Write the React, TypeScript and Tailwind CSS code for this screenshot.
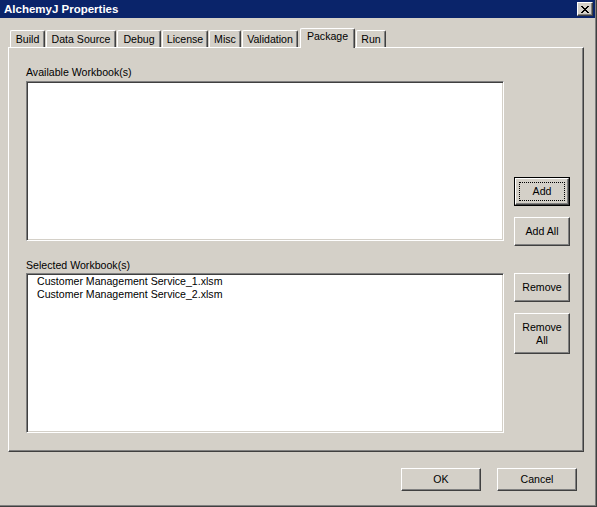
import React from 'react';

// 标签页数据
const tabs = [
  { label: 'Build', width: 'w-[35px]' },
  { label: 'Data Source', width: 'w-[70px]' },
  { label: 'Debug', width: 'w-[44px]' },
  { label: 'License', width: 'w-[46px]' },
  { label: 'Misc', width: 'w-[32px]' },
  { label: 'Validation', width: 'w-[56px]' },
  { label: 'Package', width: 'w-[55px]', active: true },
  { label: 'Run', width: 'w-[30px]' },
];

const selectedWorkbooks = [
  'Customer Management Service_1.xlsm',
  'Customer Management Service_2.xlsm',
];

function Tab({ label, width, active }: { label: string; width: string; active?: boolean }) {
  if (active) {
    return (
      <div
        className={`${width} h-[20px] -mb-px ml-px z-10 bg-[#d4d0c8] border-t border-l border-white border-r border-r-[#404040] shadow-[inset_-1px_0_0_#808080] rounded-t-[2px] flex justify-center pt-[1px]`}
      >
        <span className="leading-[13px]">{label}</span>
      </div>
    );
  }
  return (
    <div
      className={`${width} h-[17px] bg-[#d4d0c8] border-t border-l border-white border-r border-r-[#404040] shadow-[inset_-1px_0_0_#808080] rounded-t-[2px] flex justify-center pt-[2px]`}
    >
      <span className="leading-[13px]">{label}</span>
    </div>
  );
}

function Button({
  children,
  className = '',
  isDefault,
}: {
  children: React.ReactNode;
  className?: string;
  isDefault?: boolean;
}) {
  if (isDefault) {
    return (
      <div className={`border border-black bg-[#d4d0c8] flex ${className}`}>
        <div className="flex-1 relative border-t border-l border-white border-r border-b border-r-[#404040] border-b-[#404040] shadow-[inset_-1px_-1px_0_#808080] flex items-center justify-center">
          <div className="absolute inset-[3px] border border-dotted border-black" />
          <span className="leading-[13px] text-center">{children}</span>
        </div>
      </div>
    );
  }
  return (
    <div
      className={`bg-[#d4d0c8] border-t border-l border-white border-r border-b border-r-[#404040] border-b-[#404040] shadow-[inset_-1px_-1px_0_#808080] flex items-center justify-center ${className}`}
    >
      <span className="leading-[13px] text-center">{children}</span>
    </div>
  );
}

function ListBox({ items = [] as string[] }) {
  return (
    <div className="w-[478px] h-[160px] bg-white border-t border-l border-[#808080] border-r border-b border-r-white border-b-white shadow-[inset_1px_1px_0_#404040,inset_-1px_-1px_0_#d4d0c8] pt-[1px] pl-[10px]">
      {items.map(item => (
        <div key={item} className="leading-[13px]">
          {item}
        </div>
      ))}
    </div>
  );
}

export default function App() {
  return (
    <div className="w-[597px] h-[507px] bg-[#d4d0c8] border-r border-b border-[#404040] shadow-[inset_-1px_-1px_0_#808080] flex flex-col text-[10.6px] text-black font-['Liberation_Sans',Arial,sans-serif]">
      {/* 标题栏 */}
      <div className="h-[18px] mr-px bg-[#0a246a] flex items-center justify-between pl-[4px] pr-[2px]">
        <span className="text-white font-bold text-[11.5px] leading-[14px]">AlchemyJ Properties</span>
        <div className="w-[16px] h-[14px] bg-[#d4d0c8] border-t border-l border-white border-r border-b border-r-[#404040] border-b-[#404040] shadow-[inset_-1px_-1px_0_#808080] flex items-center justify-center">
          <svg width="8" height="7" viewBox="0 0 8 7" shapeRendering="crispEdges">
            <path d="M0 0h2v1h-2zM6 0h2v1h-2zM1 1h2v1h-2zM5 1h2v1h-2zM2 2h4v1h-4zM3 3h2v1h-2zM2 4h4v1h-4zM1 5h2v1h-2zM5 5h2v1h-2zM0 6h2v1h-2zM6 6h2v1h-2z" fill="#000" />
          </svg>
        </div>
      </div>

      {/* 标签页 */}
      <div className="mt-[10px] h-[19px] pl-[10px] flex items-end gap-px">
        {tabs.map(t => (
          <Tab key={t.label} {...t} />
        ))}
      </div>

      {/* 面板 */}
      <div className="ml-[8px] w-[576px] h-[405px] border-t border-l border-white border-r border-b border-r-[#404040] border-b-[#404040] shadow-[inset_-1px_-1px_0_#808080] flex">
        <div className="pl-[17px] pt-[18px] flex flex-col">
          <div className="leading-[13px]">Available Workbook(s)</div>
          <div className="mt-[2px]">
            <ListBox />
          </div>
          <div className="leading-[13px] mt-[18px]">Selected Workbook(s)</div>
          <div className="mt-[1px]">
            <ListBox items={selectedWorkbooks} />
          </div>
        </div>
        <div className="ml-[10px] pt-[129px] flex flex-col">
          <Button isDefault className="w-[56px] h-[29px]">Add</Button>
          <Button className="w-[56px] h-[29px] mt-[11px]">Add All</Button>
          <Button className="w-[56px] h-[29px] mt-[27px]">Remove</Button>
          <Button className="w-[56px] h-[41px] mt-[11px]">
            Remove
            <br />
            All
          </Button>
        </div>
      </div>

      {/* 底部按钮 */}
      <div className="mt-[16px] pr-[19px] flex justify-end gap-[16px]">
        <Button className="w-[80px] h-[23px]">OK</Button>
        <Button className="w-[80px] h-[23px]">Cancel</Button>
      </div>
    </div>
  );
}
